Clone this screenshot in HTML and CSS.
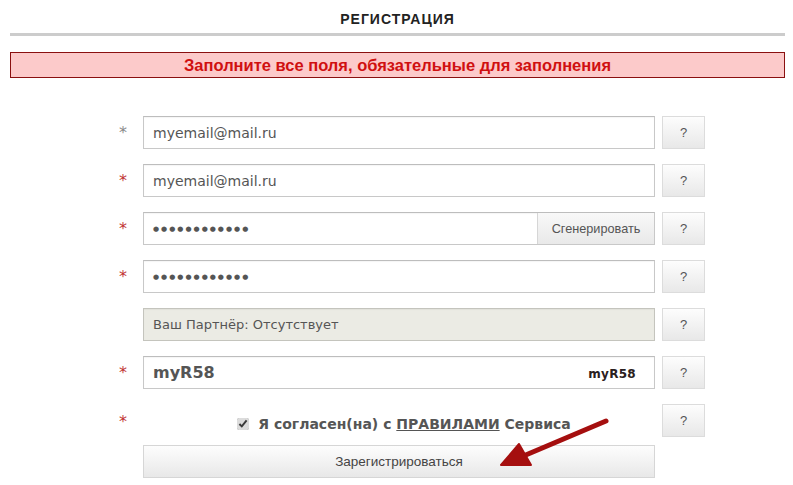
FILE: index.html
```html
<!DOCTYPE html>
<html lang="ru">
<head>
<meta charset="utf-8">
<title>Регистрация</title>
<link rel="stylesheet" href="styles.css">
</head>
<body>
<div class="page">
  <h1 class="title">РЕГИСТРАЦИЯ</h1>
  <div class="error">Заполните все поля, обязательные для заполнения</div>

  <form class="form">
    <span class="req gray">*</span>
    <div class="field"><span class="val">myemail@mail.ru</span></div>
    <button type="button" class="help">?</button>

    <span class="req">*</span>
    <div class="field"><span class="val">myemail@mail.ru</span></div>
    <button type="button" class="help">?</button>

    <span class="req">*</span>
    <div class="field with-btn"><span class="dots">●●●●●●●●●●●●</span><span class="gen">Сгенерировать</span></div>
    <button type="button" class="help">?</button>

    <span class="req">*</span>
    <div class="field"><span class="dots">●●●●●●●●●●●●</span></div>
    <button type="button" class="help">?</button>

    <span class="req empty"></span>
    <div class="field disabled"><span class="val small">Ваш Партнёр: Отсутствует</span></div>
    <button type="button" class="help">?</button>

    <span class="req">*</span>
    <div class="field captcha"><span class="val bold">myR58</span><span class="capimg">myR58</span></div>
    <button type="button" class="help">?</button>

    <span class="req agree-req">*</span>
    <label class="agree"><input type="checkbox" checked><span>Я согласен(на) с <u>ПРАВИЛАМИ</u> Сервиса</span></label>
    <button type="button" class="help">?</button>

    <span class="req empty"></span>
    <button type="button" class="submit">Зарегистрироваться</button>
    <span></span>

    <svg class="arrow" width="130" height="60" viewBox="0 0 130 60">
      <path d="M115 9 L30 45" stroke="#a50f0f" stroke-width="5" stroke-linecap="round" fill="none"/>
      <path d="M10 53 L28 32 L40 53 Z" fill="#a50f0f" stroke="#a50f0f" stroke-width="2" stroke-linejoin="round"/>
    </svg>
  </form>
</div>
</body>
</html>
```

FILE: styles.css
```css
html, body {
  margin: 0;
  padding: 0;
  background: #fff;
}

.page {
  padding: 0 8px 0 10px;
  font-family: "DejaVu Sans", Verdana, sans-serif;
}

.title {
  margin: 0;
  padding-top: 11px;
  height: 22px;
  border-bottom: 3px solid #cccccc;
  text-align: center;
  font-family: "Liberation Sans", Arial, sans-serif;
  font-size: 14px;
  font-weight: bold;
  letter-spacing: 1px;
  color: #222;
  line-height: 16px;
}

.error {
  margin-top: 16px;
  height: 24px;
  border: 1px solid #8a1010;
  background: #fccaca;
  color: #d01010;
  text-align: center;
  font-family: "Liberation Sans Narrow", "Liberation Sans", Arial, sans-serif;
  font-size: 16.5px;
  font-weight: bold;
  line-height: 24px;
}

.form {
  position: relative;
  margin: 38px 0 0 103px;
  display: grid;
  grid-template-columns: 30px 512px 50px;
  grid-auto-rows: 33px;
  row-gap: 15px;
  width: 592px;
}

.req {
  color: #c23535;
  font-size: 16px;
  line-height: 33px;
  padding-right: 10px;
  text-align: center;
  font-family: "DejaVu Sans", sans-serif;
}
.req.gray { color: #8a8a8a; }

.field {
  box-sizing: border-box;
  height: 33px;
  border: 1px solid #c8c8c8;
  border-top-color: #bdbdbd;
  background: #fff;
  display: flex;
  align-items: center;
  padding-left: 9px;
  color: #555;
  font-size: 14px;
  box-shadow: inset 0 1px 1px rgba(0,0,0,0.04);
}

.val { color: #555; }
.val.small { font-size: 13px; }
.val.bold { font-weight: bold; font-size: 16px; }

.dots {
  font-size: 7px;
  letter-spacing: 2px;
  color: #555;
  padding-top: 1px;
}

.with-btn { justify-content: space-between; padding-right: 0; }
.gen {
  box-sizing: border-box;
  height: 31px;
  width: 117px;
  border-left: 1px solid #d6d6d6;
  background: linear-gradient(#f8f8f8, #e9e9e9);
  font-family: "Liberation Sans", Arial, sans-serif;
  font-size: 12.7px;
  color: #555;
  display: flex;
  align-items: center;
  justify-content: center;
}

.disabled {
  background: #ebebe4;
  border-color: #c4c4bd;
}

.captcha { justify-content: space-between; padding-right: 18px; }
.capimg {
  font-family: "DejaVu Sans", sans-serif;
  font-weight: bold;
  font-size: 12px;
  color: #2a2020;
  letter-spacing: 0.3px;
  padding-top: 3px;
}

.help {
  justify-self: end;
  box-sizing: border-box;
  width: 43px;
  height: 33px;
  padding: 0;
  border: 1px solid #dcdcdc;
  background: linear-gradient(#fdfdfd, #e8e8e8);
  color: #555;
  font-family: "Liberation Sans", Arial, sans-serif;
  font-size: 13px;
}

.agree {
  display: flex;
  align-items: center;
  justify-content: center;
  padding-left: 10px;
  padding-top: 7px;
  font-size: 14px;
  font-weight: bold;
  color: #555;
}
.agree input {
  margin: 0 9px 0 0;
  width: 12px;
  height: 12px;
  accent-color: #dcdcdc;
}
.agree u { color: #555; }
.agree-req { line-height: 33px; padding-top: 1px; }

.submit {
  grid-row: 8;
  grid-column: 2;
  margin-top: -7px;
  height: 33px;
  box-sizing: border-box;
  border: 1px solid #d6d6d6;
  background: linear-gradient(#fdfdfd, #e8e8e8);
  font-family: "Liberation Sans", Arial, sans-serif;
  font-size: 13.5px;
  color: #444;
}

.arrow {
  position: absolute;
  left: 378px;
  top: 296px;
}
```
